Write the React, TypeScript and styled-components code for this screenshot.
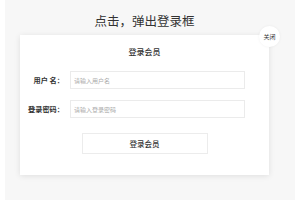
import React from "react";
import styled, { createGlobalStyle } from "styled-components";

const Global = createGlobalStyle`
  html, body { margin: 0; padding: 0; background: #fff; }
  body { font-family: "Noto Sans CJK SC", "Noto Sans", sans-serif; color: #333; }
  * { box-sizing: border-box; }
`;

const Page = styled.div`
  margin: 0 5px;
  height: 200px;
  background: #f7f7f7;
  padding: 0 0 0 15px;
  overflow: hidden;
`;

const Column = styled.div`
  width: 249px;
  display: flex;
  flex-direction: column;
  align-items: stretch;
`;

const Title = styled.h1`
  margin: 0;
  height: 35px;
  padding-top: 13px;
  font-size: 12.5px;
  line-height: 16px;
  font-weight: 400;
  text-align: center;
  color: #333;
`;

const Modal = styled.div`
  position: relative;
  height: 140px;
  background: #fff;
  box-shadow: 0 1px 6px rgba(0, 0, 0, 0.1);
  display: flex;
  flex-direction: column;
  align-items: center;
  padding-top: 10px;
`;

const Close = styled.button`
  position: absolute;
  top: -9px;
  right: -11px;
  width: 21px;
  height: 21px;
  border-radius: 50%;
  border: none;
  background: #fff;
  box-shadow: 0 0 3px rgba(0, 0, 0, 0.06);
  font-family: inherit;
  font-size: 6px;
  color: #333;
  padding: 0;
  display: flex;
  align-items: center;
  justify-content: center;
`;

const ModalTitle = styled.div`
  font-size: 8px;
  line-height: 14px;
  font-weight: 500;
  color: #333;
`;

const Form = styled.div`
  margin-top: 12px;
  width: 100%;
  display: flex;
  flex-direction: column;
  gap: 11px;
`;

const Row = styled.div`
  display: flex;
  align-items: center;
`;

const Label = styled.label`
  width: 44px;
  text-align: right;
  font-size: 7.2px;
  font-weight: 700;
  color: #333;
  white-space: pre;
`;

const Input = styled.input`
  margin-left: 6px;
  width: 175px;
  height: 18px;
  border: 1px solid #ebebeb;
  padding: 0 3px;
  font-family: inherit;
  font-size: 6px;
  outline: none;
  &::placeholder { color: #aaa; }
`;

const Submit = styled.button`
  margin-top: 15px;
  width: 126px;
  height: 21px;
  border: 1px solid #ececec;
  background: #fff;
  font-family: inherit;
  font-size: 7.5px;
  font-weight: 500;
  color: #333;
  padding: 0;
`;

export default function App() {
  return (
    <>
      <Global />
      <Page>
        <Column>
          <Title>点击，弹出登录框</Title>
          <Modal>
            <Close>关闭</Close>
            <ModalTitle>登录会员</ModalTitle>
            <Form>
              <Row>
                <Label>{"用户 名："}</Label>
                <Input placeholder="请输入用户名" />
              </Row>
              <Row>
                <Label>登录密码：</Label>
                <Input type="password" placeholder="请输入登录密码" />
              </Row>
            </Form>
            <Submit>登录会员</Submit>
          </Modal>
        </Column>
      </Page>
    </>
  );
}
